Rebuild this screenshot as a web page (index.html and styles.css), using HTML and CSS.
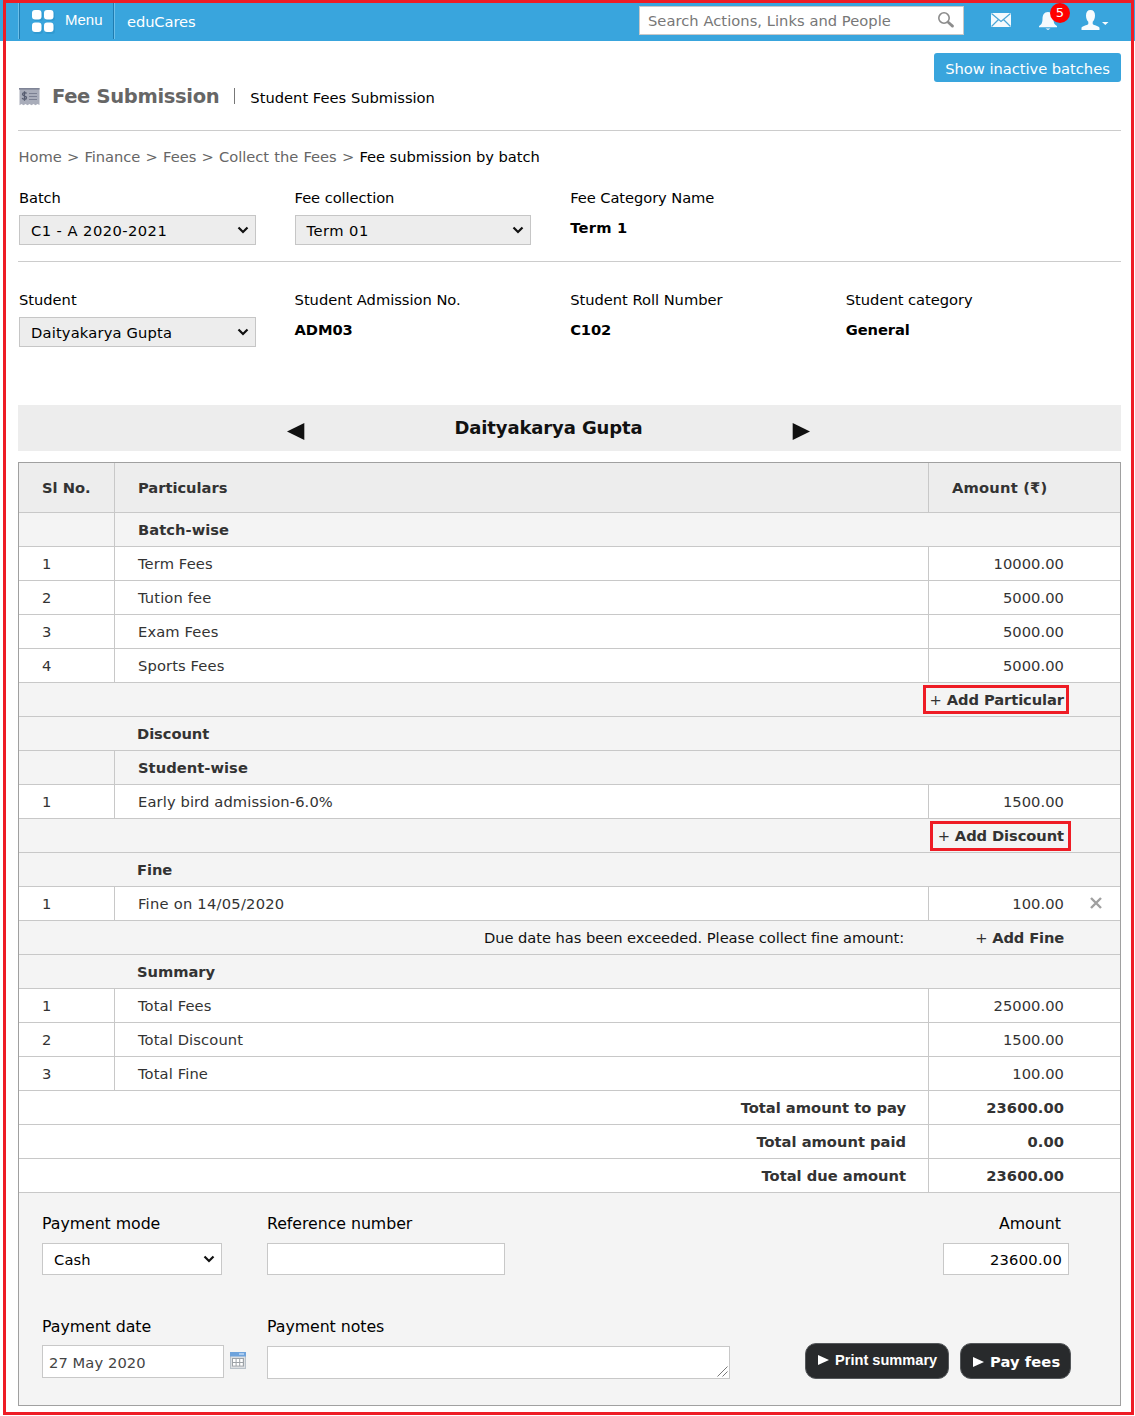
FILE: index.html
```html
<!DOCTYPE html>
<html lang="en">
<head>
<meta charset="utf-8">
<title>Fee Submission</title>
<link rel="stylesheet" href="styles.css">
</head>
<body>
<div class="topbar">
  <div class="menu">
    <svg class="menu-icon" width="24" height="24" viewBox="0 0 24 24"><g fill="#1f83b8" opacity=".3"><rect x="1" y="1" width="10" height="10" rx="3"/><rect x="13" y="1" width="10" height="10" rx="3"/><rect x="1" y="14" width="10" height="10" rx="3"/><rect x="13" y="14" width="10" height="10" rx="3"/></g><g fill="#fff"><rect x="0" y="0" width="9.5" height="9.5" rx="3"/><rect x="12" y="0" width="9.5" height="9.5" rx="3"/><rect x="0" y="12.500" width="9.5" height="9.5" rx="3"/><rect x="12" y="12.500" width="9.5" height="9.5" rx="3"/></g></svg>
    <span>Menu</span>
  </div>
  <div class="brand">eduCares</div>
  <div class="search"><span>Search Actions, Links and People</span>
    <svg width="18" height="18" viewBox="0 0 18 18" fill="none" stroke="#8c8c8c"><circle cx="7" cy="7" r="5.2" stroke-width="1.600"/><path d="M11.500 11.500l4 3.600" stroke-width="2.800" stroke-linecap="round"/></svg>
  </div>
  <svg class="mail" width="21" height="15" viewBox="0 0 21 15"><rect x="0" y="0" width="20" height="14" fill="#f4fafd"/><path d="M.5.5l9.500 8L19.500.5M.5 13.500l7-7M19.500 13.500l-7-7" fill="none" stroke="#4aa6d6" stroke-width="1.2"/></svg>
  <div class="bell">
    <svg width="18" height="19" viewBox="0 0 18 19" fill="#f4fafd"><path d="M9 0C5 0 3.6 3 3.5 7 3.4 11 2.5 12.500 0 14v1.300h18V14c-2.500-1.500-3.400-3-3.500-7C14.400 3 13 0 9 0zM6.500 16.500h5L9 18z"/></svg>
    <span class="badge">5</span>
  </div>
  <svg class="user" width="28" height="21" viewBox="0 0 28 21" fill="#f8fcfe"><path d="M9.500 0C6.500 0 5 2 5 5.500c0 3 1 5 2.300 6.200v2.200C6.500 15.500.5 15.500.5 18v2h18v-2c0-2.500-6-2.500-6.800-4.100v-2.200C13 10.500 14 8.500 14 5.500 14 2 12.500 0 9.500 0z"/><path d="M21 12h6.500l-3.200 3z"/></svg>
</div>

<div class="page">
  <div class="actions"><a class="btn-blue">Show inactive batches</a></div>
  <div class="title">
    <svg width="21" height="18" viewBox="0 0 21 18"><path d="M.5 0h20v17l-2-1-2 1.300-2-1.300-2 1.300-2-1.300-2 1.300-2-1.300-2 1.300-2-1.300-2 1.300z" fill="#a9adba"/><path d="M0 .8h20.500" stroke="#7f8496" stroke-width="1.600"/><path d="M7.500 5.500C7 4.200 3.500 4 3.500 6.200s4 1.200 4 3.500-3.700 2-4.300.4M5.500 3.200v9.600" fill="none" stroke="#565c70" stroke-width="1.300"/><path d="M10 5.500h8M10 8.500h8M10 11.500h8" stroke="#7b8092" stroke-width="1"/></svg>
    <h1>Fee Submission</h1><span class="sep"></span><span class="subtitle">Student Fees Submission</span>
  </div>

  <div class="crumbs">Home &gt; Finance &gt; Fees &gt; Collect the Fees &gt; <b>Fee submission by batch</b></div>

  <div class="filters">
    <div><label>Batch</label><div class="select"><span class="digits">C1 - A 2020-2021</span><svg class="chev" width="12" height="8" viewBox="0 0 12 8"><path d="M1.500 1.500L6 6l4.500-4.500"/></svg></div></div>
    <div><label>Fee collection</label><div class="select narrow"><span class="digits">Term 01</span><svg class="chev" width="12" height="8" viewBox="0 0 12 8"><path d="M1.500 1.500L6 6l4.500-4.500"/></svg></div></div>
    <div><label>Fee Category Name</label><strong class="wide">Term 1</strong></div>
  </div>
  <div class="filters student">
    <div><label>Student</label><div class="select"><span class="nat">Daityakarya Gupta</span><svg class="chev" width="12" height="8" viewBox="0 0 12 8"><path d="M1.500 1.500L6 6l4.500-4.500"/></svg></div></div>
    <div><label>Student Admission No.</label><strong>ADM03</strong></div>
    <div><label>Student Roll Number</label><strong>C102</strong></div>
    <div><label>Student category</label><strong>General</strong></div>
  </div>

  <div class="namebar">
    <svg width="18" height="18" viewBox="0 0 18 18"><path d="M0 8.500L17.300 0v17z" fill="#111"/></svg>
    <span>Daityakarya Gupta</span>
    <svg width="18" height="18" viewBox="0 0 18 18"><path d="M18 8.500L.7 0v17z" fill="#111"/></svg>
  </div>

  <div class="sheet">
    <table>
      <colgroup><col class="c-no"><col><col class="c-amt"></colgroup>
      <tr class="head"><th>Sl No.</th><th>Particulars</th><th class="amt-head">Amount (₹)</th></tr>
      <tr class="sub"><td></td><td colspan="2">Batch-wise</td></tr>
      <tr><td>1</td><td>Term Fees</td><td class="num">10000.00</td></tr>
      <tr><td>2</td><td>Tution fee</td><td class="num">5000.00</td></tr>
      <tr><td>3</td><td>Exam Fees</td><td class="num">5000.00</td></tr>
      <tr><td>4</td><td>Sports Fees</td><td class="num">5000.00</td></tr>
      <tr class="sub add"><td colspan="3"><a class="mark particular"><i>+</i> Add Particular</a></td></tr>
      <tr class="sub section"><td colspan="3">Discount</td></tr>
      <tr class="sub"><td></td><td colspan="2">Student-wise</td></tr>
      <tr><td>1</td><td>Early bird admission-6.0%</td><td class="num">1500.00</td></tr>
      <tr class="sub add"><td colspan="3"><a class="mark discount"><i>+</i> Add Discount</a></td></tr>
      <tr class="sub section"><td colspan="3">Fine</td></tr>
      <tr><td>1</td><td class="spaced">Fine on 14/05/2020</td><td class="num fine"><div><span>100.00</span><svg width="12" height="12" viewBox="0 0 12 12"><path d="M1 1l10 10M11 1L1 11" stroke="#a0a0a0" stroke-width="2.400"/></svg></div></td></tr>
      <tr class="sub add due"><td colspan="3"><div><span>Due date has been exceeded. Please collect fine amount:</span><a><i>+</i> Add Fine</a></div></td></tr>
      <tr class="sub section"><td colspan="3">Summary</td></tr>
      <tr><td>1</td><td>Total Fees</td><td class="num">25000.00</td></tr>
      <tr><td>2</td><td>Total Discount</td><td class="num">1500.00</td></tr>
      <tr><td>3</td><td>Total Fine</td><td class="num">100.00</td></tr>
      <tr class="total"><td colspan="2">Total amount to pay</td><td class="num">23600.00</td></tr>
      <tr class="total"><td colspan="2">Total amount paid</td><td class="num">0.00</td></tr>
      <tr class="total"><td colspan="2">Total due amount</td><td class="num">23600.00</td></tr>
    </table>

    <div class="payment">
      <div class="row">
        <div class="col-a"><label>Payment mode</label><div class="field select mode"><span>Cash</span><svg class="chev" width="12" height="8" viewBox="0 0 12 8"><path d="M1.500 1.500L6 6l4.500-4.500"/></svg></div></div>
        <div><label>Reference number</label><div class="field ref"></div></div>
        <div class="right"><label>Amount</label><div class="field amount">23600.00</div></div>
      </div>
      <div class="row second">
        <div class="col-a"><label>Payment date</label>
          <div class="datewrap"><div class="field date">27 May 2020</div>
            <svg width="16" height="17" viewBox="0 0 16 17"><rect x=".5" y=".5" width="15" height="16" fill="#dcdfe2" stroke="#b9c1c9"/><rect x="0" y="0" width="16" height="4.500" fill="#6ea3dc"/><rect x="9" y="1" width="5" height="2" fill="#a9cbf0"/><rect x="2" y="6" width="12" height="8.500" fill="#9da2a7"/><g fill="#fff"><rect x="3" y="7" width="2.600" height="3"/><rect x="6.600" y="7" width="2.600" height="3"/><rect x="10.200" y="7" width="2.600" height="3"/><rect x="3" y="11" width="2.600" height="2.600"/><rect x="6.600" y="11" width="2.600" height="2.600"/><rect x="10.200" y="11" width="2.600" height="2.600"/></g></svg>
          </div>
        </div>
        <div><label>Payment notes</label><div class="field notes"><svg width="11" height="11" viewBox="0 0 11 11"><path d="M.5 10.500l10-10M5.500 10.500l5-5" stroke="#777" stroke-width="1"/></svg></div></div>
        <div class="buttons">
          <a class="btn-dark print"><svg width="11" height="10" viewBox="0 0 11 10"><path d="M0 0l11 5-11 5z" fill="#fff"/></svg>Print summary</a>
          <a class="btn-dark pay"><svg width="11" height="10" viewBox="0 0 11 10"><path d="M0 0l11 5-11 5z" fill="#fff"/></svg>Pay fees</a>
        </div>
      </div>
    </div>
  </div>
</div>
<div class="frame"></div>
</body>
</html>
```
FILE: styles.css
```css
*, *::after { box-sizing: border-box; }
body {
  margin: 0;
  position: relative;
  height: 1416px;
  overflow: hidden;
  background: #fff;
  color: #000;
  font: 14.700px/20px "DejaVu Sans", Verdana, sans-serif;
  letter-spacing: .04px;
}
svg { display: block; flex: none; }

/* red outline round the whole screen */
.frame {
  position: absolute;
  left: 3px; top: 0;
  width: 1131px; height: 1415px;
  border: 3px solid #ee1c25;
}

/* top bar */
.topbar {
  display: flex;
  align-items: flex-start;
  height: 41px;
  padding-left: 18px;
  background: #39a5dd;
  color: #fff;
}
.menu {
  display: flex;
  width: 97px;
  height: 39px;
  padding: 10px 0 0 12px;
  border-left: 1px solid #6cc0ea;
  border-right: 1px solid #6cc0ea;
  box-shadow: inset 1px 0 #1f7cb0, inset -1px 0 #1f7cb0;
  font-family: "Liberation Sans", Arial, sans-serif;
  font-size: 15px;
  letter-spacing: 0;
  gap: 9px;
}
.menu-icon { margin-left: 1px; }
.brand { margin: 12px 0 0 12px; letter-spacing: -0.100px; }
.search {
  display: flex;
  justify-content: space-between;
  width: 325px;
  height: 29px;
  margin: 6px 0 0 auto;
  padding: 4px 8px 0;
  background: #fff;
  border: 1px solid #c8c8c8;
  color: #777;
}
.mail { margin: 13px 0 0 27px; }
.bell { position: relative; margin: 12px 0 0 27px; }
.badge {
  position: absolute;
  left: 11px; top: -9px;
  width: 20px; height: 20px;
  border-radius: 50%;
  background: #f00;
  text-align: center;
  font-size: 13px;
  letter-spacing: 0;
}
.user { margin: 10px 26px 0 24px; }

/* page header */
.page { margin: 0 14px 0 18px; }
.actions { display: flex; justify-content: flex-end; padding-top: 12px; }
.btn-blue {
  width: 187px;
  height: 29px;
  border-radius: 3px;
  background: #39a5dd;
  color: #fff;
  text-align: center;
  line-height: 31px;
  letter-spacing: -0.030px;
}
.title {
  display: flex;
  align-items: center;
  height: 49px;
  padding-bottom: 20px;
  border-bottom: 1px solid #ccc;
}
.title svg { margin: 1px 0 0 1px; }
h1 {
  margin: 1px 0 0 12px;
  font-size: 19.500px;
  letter-spacing: -0.320px;
  color: #666;
}
.sep { width: 1px; height: 16px; margin: 0 15px 0 15px; background: #777; }
.subtitle { margin-top: 3px; letter-spacing: 0; }
.crumbs { margin: 16px 0 0 .5px; color: #666; letter-spacing: -0.040px; word-spacing: .6px; }
.crumbs b { font-weight: normal; color: #000; letter-spacing: -0.050px; word-spacing: 0; }

/* filters */
.filters {
  display: grid;
  grid-template-columns: repeat(4, 275.600px);
  height: 75px;
  margin-top: 20px;
  padding: 1px 0 0 1px;
  border-bottom: 1px solid #ccc;
}
.filters.student { margin-top: 27px; border: 0; }
label { display: block; letter-spacing: -0.080px; }
.student label { letter-spacing: -0.030px; }
strong { display: block; margin-top: 10px; letter-spacing: -0.100px; }
.wide { letter-spacing: .230px; }
.select {
  display: flex;
  align-items: center;
  justify-content: space-between;
  width: 237px;
  height: 30px;
  margin-top: 7px;
  padding: 0 6px 0 11px;
  background: #ededed;
  border: 1px solid #c6c6c6;
}
.select span { padding-top: 2px; }
.narrow { width: 236px; }
.digits { letter-spacing: .450px; }
.nat { letter-spacing: .170px; }
.chev { fill: none; stroke: #111; stroke-width: 2.200; }

/* student switcher */
.namebar {
  display: flex;
  height: 46px;
  margin-top: 41px;
  padding-left: 269px;
  background: #ededed;
  color: #111;
  font-size: 18px;
  font-weight: bold;
  letter-spacing: -0.120px;
}
.namebar svg { margin-top: 18px; }
.namebar span { width: 487px; padding-top: 13px; text-align: center; }

/* fee sheet */
.sheet { margin-top: 11px; border: 1px solid #a0a0a0; background: #f4f4f4; }
table {
  width: 100%;
  table-layout: fixed;
  border-collapse: separate;
  border-spacing: 0;
  color: #333;
  letter-spacing: .120px;
}
.c-no { width: 96px; }
.c-amt { width: 191px; }
td, th {
  height: 34px;
  padding: 0 0 0 23px;
  border-bottom: 1px solid #c8c8c8;
  border-right: 1px solid #c8c8c8;
  background: #fff;
  text-align: left;
  line-height: 33px;
}
td:last-child, th:last-child { border-right: 0; }
.head th { height: 50px; background: #ededed; letter-spacing: -0.030px; }
.head th.amt-head { letter-spacing: .200px; }
.sub td { background: #f4f4f4; font-weight: bold; letter-spacing: .040px; }
.sub.section td { padding-left: 118px; letter-spacing: -0.060px; }
td.num { padding-right: 56px; text-align: right; letter-spacing: .050px; }
.sub.add td { padding: 0 56px 0 0; text-align: right; letter-spacing: -0.090px; }
.add i { font-style: normal; font-weight: normal; }
.mark { position: relative; }
/* red highlight boxes over the add links */
.mark::after {
  content: "";
  position: absolute;
  border: 3px solid #ee1c25;
}
.particular::after { right: -5px; top: -6px; width: 146px; height: 29px; }
.discount::after { right: -7px; top: -6px; width: 141px; height: 30px; }
.spaced { letter-spacing: .240px; }
td.fine { padding-right: 18px; }
.fine div { display: flex; justify-content: flex-end; align-items: flex-start; gap: 26px; }
.fine svg { margin-top: 10px; }
.due div { display: flex; justify-content: space-between; padding-left: 465px; }
.due span { color: #111; font-weight: normal; letter-spacing: -0.060px; }
.due a { letter-spacing: -0.160px; }
.total td { font-weight: bold; letter-spacing: 0; }
.total td:first-child { padding-right: 22px; text-align: right; }
.total td.num { letter-spacing: .080px; }

/* payment form */
.payment { padding: 21px 49px 27px 23px; }
.payment label { font-size: 15.800px; letter-spacing: -0.060px; }
.row { display: flex; height: 61px; }
.second { margin-top: 42px; }
.col-a { width: 225px; }
.field {
  height: 32px;
  margin-top: 9px;
  background: #fff;
  border: 1px solid #c8c8c8;
  line-height: 31px;
}
.payment .mode { width: 180px; letter-spacing: .150px; }
.mode span { padding-top: 0; }
.ref { width: 238px; }
.right { margin-left: auto; text-align: right; }
.payment .right label { padding-right: 10px; letter-spacing: 0; }
.amount { width: 126px; margin-right: 2px; padding-right: 6px; letter-spacing: .250px; }
.datewrap { display: flex; gap: 6px; }
.datewrap svg { margin-top: 15px; }
.date { width: 182px; height: 33px; margin-top: 8px; padding-left: 6px; color: #444; line-height: 33px; letter-spacing: .080px; }
.notes { display: flex; justify-content: flex-end; align-items: flex-end; width: 463px; height: 33px; padding: 1px; }
.buttons { display: flex; gap: 11px; margin-left: auto; padding-top: 26px; }
.btn-dark {
  display: flex;
  height: 36px;
  border: 1px solid #55585b;
  border-radius: 11px;
  background: #282a2c;
  color: #fff;
  font-weight: bold;
}
.print { width: 144px; padding: 6px 0 0 12px; gap: 6px; font-family: "Liberation Sans", Arial, sans-serif; font-size: 14.600px; letter-spacing: 0; }
.pay { width: 111px; padding: 8px 0 0 12px; gap: 6px; letter-spacing: .080px; }
.print svg, .pay svg { margin-top: 5px; }
```
